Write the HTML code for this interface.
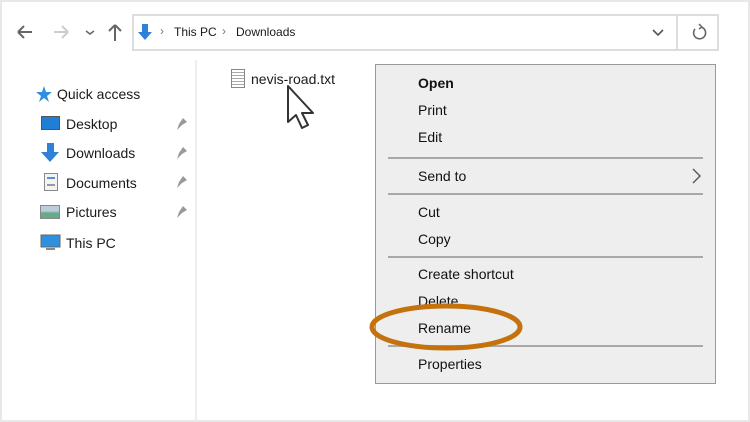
<!DOCTYPE html>
<html><head><style>
*{margin:0;padding:0;box-sizing:border-box}
body{width:750px;height:422px;background:#e8e8e8;font-family:"Liberation Sans",sans-serif;position:relative;overflow:hidden}
.frame{position:absolute;left:2px;top:2px;width:746px;height:418px;background:#fff}
.a{position:absolute;white-space:nowrap;color:#1a1a1a;font-size:14px}
.m{position:absolute;left:418px;font-size:14px;color:#111;transform:translateY(-50%)}
.sep{position:absolute;left:388px;width:315px;height:2px;background:#a8a8a8}
</style></head><body>
<div class="frame"></div>
<!-- nav -->
<svg style="position:absolute;left:0;top:0" width="135" height="60">
<path d="M18 32h14M18 32l6-6M18 32l6 6" stroke="#666" stroke-width="2" fill="none"/>
<path d="M54 32h14M68 32l-6-6M68 32l-6 6" stroke="#ccc" stroke-width="2" fill="none"/>
<path d="M86 31l4 3 4-3" stroke="#666" stroke-width="1.5" fill="none"/>
<path d="M115 41V25M115 25l-6 6M115 25l6 6" stroke="#666" stroke-width="2" fill="none"/>
</svg>
<div style="position:absolute;left:132px;top:14px;width:587px;height:37px;border:2px solid #ddd;background:#fff"></div>
<div style="position:absolute;left:676px;top:14px;width:2px;height:37px;background:#ddd"></div>
<svg style="position:absolute;left:136px;top:22px" width="20" height="20"><path d="M6 2h6v8h4l-7 8-7-8h4z" fill="#2f80d8"/></svg>
<div class="a" style="left:160px;top:24px;font-size:12px;color:#777">›</div>
<div class="a" style="left:174px;top:25px;font-size:12px">This PC</div>
<div class="a" style="left:222px;top:24px;font-size:12px;color:#777">›</div>
<div class="a" style="left:236px;top:25px;font-size:12px">Downloads</div>
<svg style="position:absolute;left:650px;top:28px" width="16" height="10"><path d="M3 2l5 5 5-5" stroke="#555" stroke-width="1.6" fill="none"/></svg>
<svg style="position:absolute;left:690px;top:23px" width="18" height="18"><path d="M5 6a6 6 0 1 0 6-2" stroke="#666" stroke-width="1.6" fill="none"/><path d="M9 1l3 3-3 2" stroke="#666" stroke-width="1.5" fill="none"/></svg>
<!-- sidebar -->
<div style="position:absolute;left:195px;top:60px;width:2px;height:360px;background:#eee"></div>
<svg style="position:absolute;left:34px;top:85px" width="18" height="18"><path d="M10 1l2 6h6l-5 4 2 6-5-4-5 4 2-6-5-4h6z" fill="#2f8ee0"/></svg>
<div class="a" style="left:57px;top:86px">Quick access</div>
<div style="position:absolute;left:41px;top:116px;width:19px;height:14px;background:#1f7fd6;border:1px solid #555"></div>
<div class="a" style="left:66px;top:116px">Desktop</div>
<svg style="position:absolute;left:40px;top:142px" width="22" height="22"><path d="M7 1h7v9h5l-9 10-9-10h6z" fill="#2f80d8"/></svg>
<div class="a" style="left:66px;top:145px">Downloads</div>
<div style="position:absolute;left:44px;top:173px;width:14px;height:18px;border:1px solid #888;background:#f4f4f4"><div style="margin:3px 2px;height:9px;border-top:2px solid #5a8fd0;border-bottom:2px solid #999"></div></div>
<div class="a" style="left:66px;top:175px">Documents</div>
<div style="position:absolute;left:40px;top:205px;width:20px;height:14px;border:1px solid #888;background:linear-gradient(#bcd 40%,#6a8 60%)"></div>
<div class="a" style="left:66px;top:204px">Pictures</div>
<svg style="position:absolute;left:40px;top:234px" width="22" height="18"><rect x="1" y="1" width="19" height="12" fill="#2f90e0" stroke="#666"/><rect x="6" y="14" width="9" height="2" fill="#888"/></svg>
<div class="a" style="left:66px;top:235px">This PC</div>
<svg style="position:absolute;left:174px;top:115px" width="16" height="110"><g fill="#999"><path d="M5 9l4-6 4 4-5 3-5 5z"/><path d="M5 38l4-6 4 4-5 3-5 5z"/><path d="M5 67l4-6 4 4-5 3-5 5z"/><path d="M5 97l4-6 4 4-5 3-5 5z"/></g></svg>
<!-- file -->
<div style="position:absolute;left:231px;top:69px;width:14px;height:19px;border:1px solid #888;background:repeating-linear-gradient(#fff 0 2px,#aaa 2px 3px)"></div>
<div class="a" style="left:251px;top:71px">nevis-road.txt</div>
<svg style="position:absolute;left:283px;top:82px" width="40" height="56"><path d="M5 4v36l8-7 6 13 6-3-6-12h11z" fill="#fff" stroke="#333" stroke-width="2" stroke-linejoin="round"/></svg>
<!-- menu -->
<div style="position:absolute;left:375px;top:64px;width:341px;height:320px;background:#eee;border:1px solid #999"></div>
<div class="m" style="top:83px;font-weight:bold">Open</div>
<div class="m" style="top:110px">Print</div>
<div class="m" style="top:137px">Edit</div>
<div class="sep" style="top:157px"></div>
<div class="m" style="top:176px">Send to</div>
<svg style="position:absolute;left:690px;top:167px" width="14" height="18"><path d="M3 2l7 7-7 7" stroke="#555" stroke-width="1.4" fill="none"/></svg>
<div class="sep" style="top:193px"></div>
<div class="m" style="top:212px">Cut</div>
<div class="m" style="top:239px">Copy</div>
<div class="sep" style="top:256px"></div>
<div class="m" style="top:274px">Create shortcut</div>
<div class="m" style="top:301px">Delete</div>
<div class="m" style="top:328px">Rename</div>
<div class="sep" style="top:345px"></div>
<div class="m" style="top:364px">Properties</div>
<svg style="position:absolute;left:0;top:0" width="750" height="422"><ellipse cx="446" cy="327" rx="74" ry="21" fill="none" stroke="#c4720e" stroke-width="5"/></svg>
</body></html>
